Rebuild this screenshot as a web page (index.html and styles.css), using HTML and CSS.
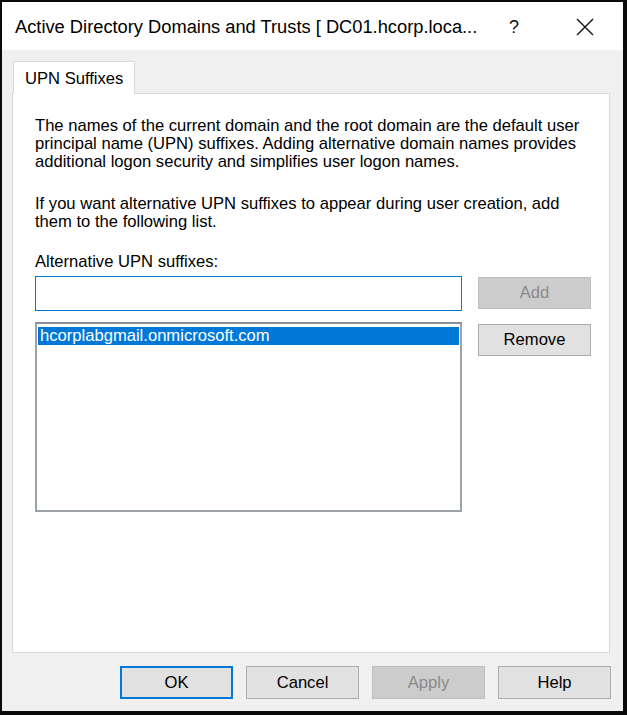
FILE: index.html
```html
<!DOCTYPE html>
<html lang="en">
<head>
<meta charset="utf-8">
<title>Active Directory Domains and Trusts</title>
<link rel="stylesheet" href="styles.css">
</head>
<body>
<div class="window">
  <div class="titlebar">
    <span class="title">Active Directory Domains and Trusts [ DC01.hcorp.loca...</span>
    <span class="help-btn">?</span>
    <span class="close-btn">
      <svg width="18" height="18" viewBox="0 0 18 18"><path d="M1 1 L17 17 M17 1 L1 17" stroke="#111" stroke-width="1.4" fill="none"/></svg>
    </span>
  </div>
  <div class="content">
    <div class="tabs"><div class="tab">UPN Suffixes</div></div>
    <div class="panel">
      <p class="para">The names of the current domain and the root domain are the default user principal name (UPN) suffixes. Adding alternative domain names provides additional logon security and simplifies user logon names.</p>
      <p class="para para2">If you want alternative UPN suffixes to appear during user creation, add them to the following list.</p>
      <div class="label">Alternative UPN suffixes:</div>
      <div class="grid">
        <div class="input"></div>
        <div class="btn btn-disabled btn-add">Add</div>
        <div class="list"><div class="item selected">hcorplabgmail.onmicrosoft.com</div></div>
        <div class="btn btn-remove">Remove</div>
      </div>
    </div>
    <div class="footer">
      <div class="btn btn-foot btn-default">OK</div>
      <div class="btn btn-foot">Cancel</div>
      <div class="btn btn-foot btn-disabled">Apply</div>
      <div class="btn btn-foot">Help</div>
    </div>
  </div>
</div>
</body>
</html>
```
FILE: styles.css
```css
* { box-sizing: border-box; }
html, body { margin: 0; padding: 0; background: #000; }
body { font-family: "Liberation Sans", Arial, sans-serif; font-size: 16.6px; color: #000; }
.window {
  width: 627px; height: 715px;
  border-style: solid; border-color: #0a0a0a;
  border-width: 2px 4px 4px 2px;
  background: #f0f0f0;
  display: flex; flex-direction: column;
}
.titlebar {
  height: 48px; background: #fff;
  display: flex; align-items: center;
  padding-left: 13px; padding-top: 2px;
}
.title { font-size: 18.3px; flex: 1; white-space: nowrap; color: #000; }
.help-btn { font-size: 18px; width: 20px; margin-right: 52px; text-align: center; color: #111; }
.close-btn { width: 18px; height: 18px; margin-right: 29px; display: flex; }
.content { padding: 11px 13px 0 10px; flex: 1; display: flex; flex-direction: column; }
.tabs { display: flex; }
.tab {
  width: 122px; height: 33px; background: #fff;
  border: 1px solid #d9d9d9; border-bottom: none;
  margin-left: 1px; margin-bottom: -1px;
  position: relative; z-index: 1;
  padding-left: 11px; line-height: 33px; font-size: 16.6px; white-space: nowrap;
}
.panel {
  height: 560px; background: #fff; border: 1px solid #d9d9d9;
  padding: 23px 0 0 22px;
}
.para { margin: 0; width: 570px; line-height: 18px; }
.para2 { margin-top: 24px; width: 545px; }
.label { margin-top: 22px; line-height: 18px; }
.grid {
  margin-top: 5px;
  display: grid;
  grid-template-columns: 427px 113px;
  column-gap: 16px;
  row-gap: 11px;
}
.input { height: 35px; border: 1px solid #0078d7; background: #fff; }
.btn {
  background: #e1e1e1; border: 1px solid #adadad;
  display: flex; align-items: center; justify-content: center;
  height: 32px; font-size: 16.6px;
}
.btn-add { margin-top: 1px; }
.btn-disabled { background: #cccccc; border-color: #bfbfbf; color: #8a8a8a; }
.list {
  height: 190px; border: 2px solid #9ea2aa; border-top-color: #8a8e96; background: #fff;
  padding: 3px 1px;
}
.item { height: 18px; line-height: 18px; padding-left: 2px; }
.selected { background: #0078d7; color: #fff; }
.btn-remove { margin-top: 2px; }
.footer {
  display: flex; justify-content: flex-end; gap: 13px;
  margin-top: 13px; margin-right: -1px;
}
.btn-foot { width: 113px; height: 33px; }
.btn-default { border: 2px solid #0078d7; }
```
